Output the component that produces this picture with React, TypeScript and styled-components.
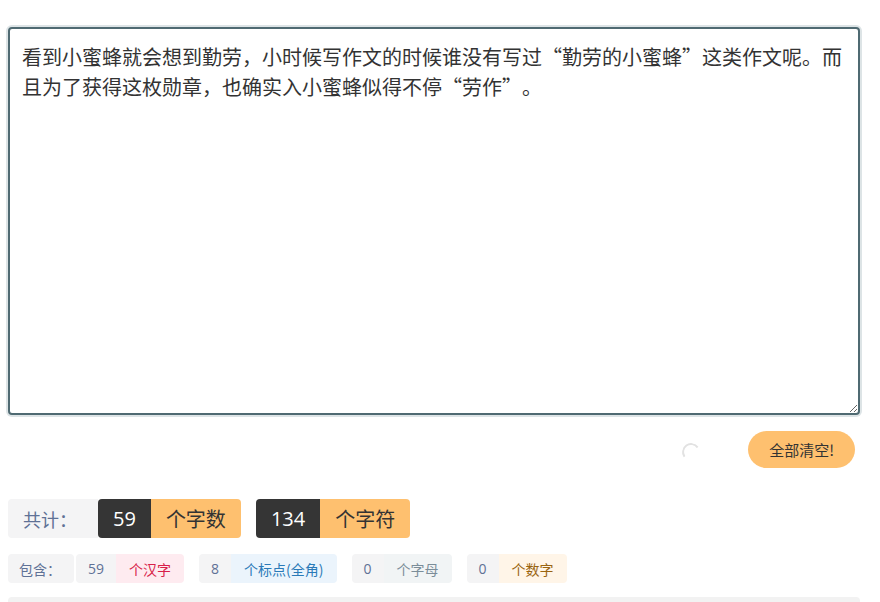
import styled, { createGlobalStyle, keyframes } from 'styled-components';

const GlobalStyle = createGlobalStyle`
  body {
    margin: 0;
    background: #ffffff;
    font-family: "Noto Sans CJK SC", "Noto Sans", sans-serif;
  }
`;

const TEXT =
  '看到小蜜蜂就会想到勤劳，小时候写作文的时候谁没有写过“勤劳的小蜜蜂”这类作文呢。而且为了获得这枚勋章，也确实入小蜜蜂似得不停“劳作”。';

type Tone = 'pink' | 'blue' | 'gray' | 'cream';

const tones: Record<Tone, { bg: string; fg: string }> = {
  pink: { bg: '#feebf0', fg: '#d81e4a' },
  blue: { bg: '#ebf4fc', fg: '#2a7ab8' },
  gray: { bg: '#f1f4f5', fg: '#7b8d99' },
  cream: { bg: '#fff5e8', fg: '#9a6410' },
};

const details: { count: number; label: string; tone: Tone }[] = [
  { count: 59, label: '个汉字', tone: 'pink' },
  { count: 8, label: '个标点(全角)', tone: 'blue' },
  { count: 0, label: '个字母', tone: 'gray' },
  { count: 0, label: '个数字', tone: 'cream' },
];

const App = () => {
  return (
    <>
      <GlobalStyle />
      <Page>
        <Editor defaultValue={TEXT} spellCheck={false} lang="zh-CN" />

        <ActionRow>
          <Spinner />
          <ClearButton>全部清空!</ClearButton>
        </ActionRow>

        <TotalRow>
          <TotalLabel>共计：</TotalLabel>
          <TotalGroup>
            <TotalNumber>59</TotalNumber>
            <TotalUnit>个字数</TotalUnit>
          </TotalGroup>
          <TotalGroup>
            <TotalNumber>134</TotalNumber>
            <TotalUnit>个字符</TotalUnit>
          </TotalGroup>
        </TotalRow>

        <DetailRow>
          <DetailLabel>包含：</DetailLabel>
          {details.map((d) => (
            <DetailGroup key={d.label}>
              <DetailNumber>{d.count}</DetailNumber>
              <DetailUnit $tone={d.tone}>{d.label}</DetailUnit>
            </DetailGroup>
          ))}
        </DetailRow>

        <BottomBar />
      </Page>
    </>
  );
};

const spin = keyframes`
  to { transform: rotate(360deg); }
`;

const Page = styled.div`
  padding: 27px 20px 0 8px;
  display: flex;
  flex-direction: column;
`;

const Editor = styled.textarea`
  box-sizing: border-box;
  width: 852px;
  height: 388px;
  padding: 13px 12px;
  border: 2px solid #4f6a72;
  border-radius: 4px;
  box-shadow: 0 0 0 2px #dde4e6;
  outline: none;
  font-family: "Noto Sans CJK SC", sans-serif;
  font-size: 20px;
  line-height: 30px;
  color: #333333;
  resize: both;
  text-spacing-trim: space-all;
`;

const ActionRow = styled.div`
  display: flex;
  align-items: center;
  justify-content: flex-end;
  gap: 48px;
  margin-top: 16px;
  padding-right: 5px;
`;

const Spinner = styled.span`
  width: 14px;
  height: 14px;
  margin-top: 5px;
  border-radius: 50%;
  border: 2px solid transparent;
  border-top-color: #e2e2e2;
  border-left-color: #e2e2e2;
  transform: rotate(10deg);
  animation: ${spin} 100000s linear infinite;
`;

const ClearButton = styled.button`
  height: 37px;
  padding: 0 21px;
  border: none;
  border-radius: 19px;
  background: #fec06f;
  color: #333333;
  font-family: "Noto Sans CJK SC", sans-serif;
  font-size: 15px;
  cursor: pointer;
`;

const TotalRow = styled.div`
  display: flex;
  align-items: stretch;
  gap: 15px;
  margin-top: 31px;
  height: 39px;
`;

const TotalLabel = styled.div`
  display: flex;
  align-items: center;
  width: 90px;
  margin-right: -15px;
  padding-left: 15px;
  box-sizing: border-box;
  background: #f4f4f5;
  border-radius: 4px 0 0 4px;
  color: #5f7196;
  font-size: 18px;
`;

const TotalGroup = styled.div`
  display: flex;
  border-radius: 4px;
  overflow: hidden;
`;

const TotalNumber = styled.div`
  display: flex;
  align-items: center;
  padding: 0 15px;
  background: #353535;
  color: #ffffff;
  font-family: "Open Sans", "Noto Sans", sans-serif;
  font-size: 20px;
`;

const TotalUnit = styled.div`
  display: flex;
  align-items: center;
  padding: 0 15px;
  background: #fec06f;
  color: #333333;
  font-size: 20px;
`;

const DetailRow = styled.div`
  display: flex;
  gap: 15px;
  margin-top: 16px;
  height: 29px;
`;

const DetailLabel = styled.div`
  display: flex;
  align-items: center;
  width: 66px;
  margin-right: -13px;
  padding-left: 11px;
  box-sizing: border-box;
  background: #f4f4f5;
  border-radius: 4px;
  color: #5f7196;
  font-size: 14px;
`;

const DetailGroup = styled.div`
  display: flex;
  border-radius: 4px;
  overflow: hidden;
`;

const DetailNumber = styled.div`
  display: flex;
  align-items: center;
  padding: 0 12px;
  background: #f4f4f5;
  color: #5f7196;
  font-family: "Open Sans", "Noto Sans", sans-serif;
  font-size: 14px;
`;

const DetailUnit = styled.div<{ $tone: Tone }>`
  display: flex;
  align-items: center;
  padding: 0 13px;
  background: ${({ $tone }) => tones[$tone].bg};
  color: ${({ $tone }) => tones[$tone].fg};
  font-size: 14px;
`;

const BottomBar = styled.div`
  margin-top: 14px;
  height: 20px;
  background: #f2f2f2;
  border-radius: 4px 4px 0 0;
`;

export default App;
